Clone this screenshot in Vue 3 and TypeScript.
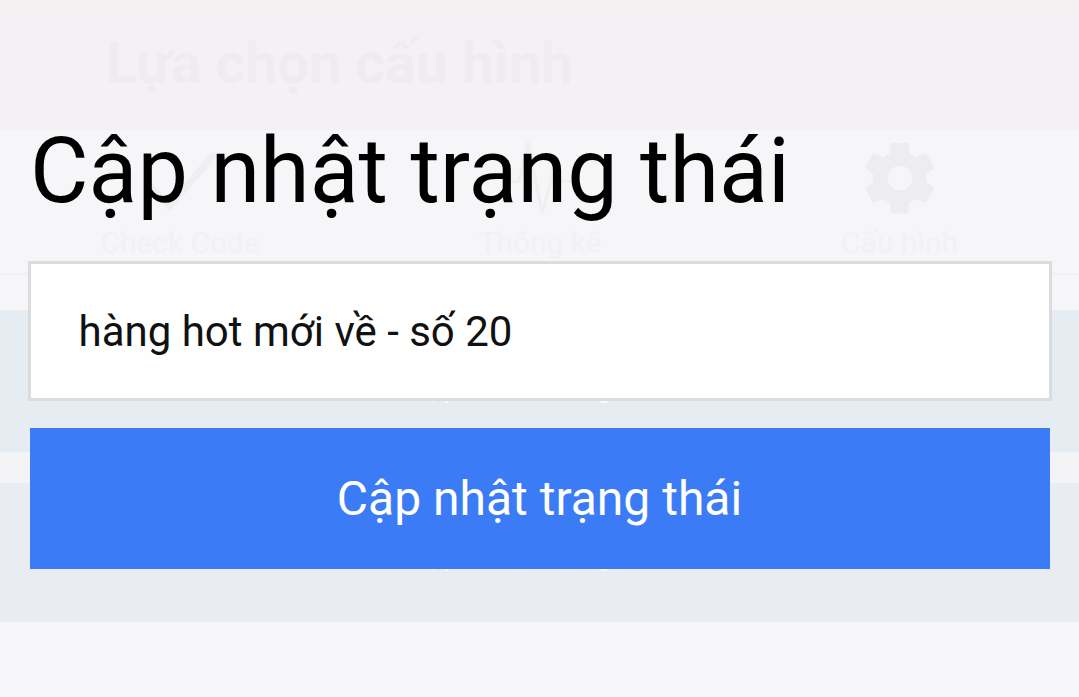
<script setup lang="ts">
const tabs = [
  { label: 'Check Code', kind: 'check' },
  { label: 'Thông kê', kind: 'pulse' },
  { label: 'Cấu hình', kind: 'gear' },
]
</script>

<template>
  <div class="screen">
    <div class="page">
      <header class="top"><h2 class="top-title">Lựa chọn cấu hình</h2></header>
      <nav class="tabs">
        <div v-for="t in tabs" :key="t.label" class="tab">
          <svg class="tab-icon" viewBox="0 0 24 24">
            <path v-if="t.kind === 'check'" d="M2 13l7 7L22 5" fill="none" stroke="#efeef1" stroke-width="2" />
            <path v-else-if="t.kind === 'pulse'" d="M2 13h4l2.6-11.3 4 20.3 3-11 1.5 2h5" fill="none" stroke="#efeef1" stroke-width="0.8" />
            <path v-else fill="#edecef" fill-rule="evenodd" d="M19.4 13c.04-.33.06-.66.06-1s-.02-.67-.06-1l2.1-1.65a.5.5 0 0 0 .12-.64l-2-3.46a.5.5 0 0 0-.61-.22l-2.49 1a7.3 7.3 0 0 0-1.73-1l-.38-2.65A.5.5 0 0 0 13.9 2h-4a.5.5 0 0 0-.49.42L9 5.07a7.7 7.7 0 0 0-1.73 1l-2.49-1a.5.5 0 0 0-.61.22l-2 3.46a.5.5 0 0 0 .12.64L4.4 11c-.04.33-.07.66-.07 1s.03.67.07 1l-2.11 1.65a.5.5 0 0 0-.12.64l2 3.46c.12.22.39.3.61.22l2.49-1c.52.4 1.08.73 1.73 1l.38 2.65c.04.24.25.42.49.42h4c.25 0 .46-.18.49-.42l.38-2.65a7.7 7.7 0 0 0 1.73-1l2.49 1c.22.08.49 0 .61-.22l2-3.46a.5.5 0 0 0-.12-.64L19.4 13zM12 15.5a3.5 3.5 0 1 1 0-7 3.5 3.5 0 0 1 0 7z" />
          </svg>
          <span class="tab-label">{{ t.label }}</span>
        </div>
      </nav>
      <div class="gap"></div>
      <div class="row row-a"><span>Cập nhật trạng thái</span></div>
      <div class="divider"></div>
      <div class="row row-b"><span>Cập nhật trạng thái</span></div>
      <div class="rest"></div>
    </div>

    <div class="dialog">
      <h1 class="title">Cập nhật trạng thái</h1>
      <div class="field">hàng hot mới về - số 20</div>
      <button class="submit" type="button">Cập nhật trạng thái</button>
    </div>
  </div>
</template>

<style scoped>
.screen {
  position: relative;
  width: 1079px;
  height: 697px;
  overflow: hidden;
  font-family: Roboto, "Noto Sans", sans-serif;
}
.page {
  display: flex;
  flex-direction: column;
  height: 100%;
  background: #f6f6f8;
}
.top {
  height: 130px;
  box-sizing: border-box;
  padding: 30px 0 0 106px;
  background: linear-gradient(#f5f0f2, #f3f1f5 40%);
}
.top-title {
  margin: 0;
  font-size: 57px;
  line-height: 68px;
  font-weight: 700;
  color: #efecf0;
  white-space: nowrap;
}
.tabs {
  display: grid;
  grid-template-columns: 360px 360px 359px;
  height: 145px;
  box-sizing: border-box;
  border-bottom: 2px solid #f0f1f3;
  background: #f6f5f8;
}
.tab {
  display: flex;
  flex-direction: column;
  align-items: center;
  padding-top: 6px;
}
.tab-icon {
  width: 84px;
  height: 84px;
}
.tab-label {
  margin-top: 6px;
  font-size: 30px;
  line-height: 34px;
  color: #f2f1f4;
  white-space: nowrap;
}
.gap {
  height: 35px;
  background: #f6f6f8;
}
.row {
  display: flex;
  justify-content: center;
  font-size: 32px;
  line-height: 40px;
  color: #f8fafc;
}
.row-a {
  height: 142px;
  padding-top: 56px;
  box-sizing: border-box;
  background: #e5edf3;
}
.row-b {
  height: 139px;
  padding-top: 51px;
  box-sizing: border-box;
  background: #e9edf1;
}
.divider {
  height: 31px;
  background: #f4f4f6;
}
.rest {
  flex: 1;
}
.dialog {
  position: absolute;
  inset: 0;
  display: flex;
  flex-direction: column;
  align-items: center;
}
.title {
  align-self: flex-start;
  margin: 116px 0 0 30px;
  font-size: 90px;
  line-height: 112px;
  font-weight: 400;
  color: #000;
  white-space: nowrap;
}
.field {
  box-sizing: border-box;
  width: 1024px;
  height: 140px;
  margin-top: 33px;
  padding-left: 48px;
  display: flex;
  align-items: center;
  background: #fff;
  border: 3px solid #dcdcde;
  font-size: 42px;
  color: #111;
  white-space: nowrap;
}
.submit {
  width: 1020px;
  height: 141px;
  margin-top: 27px;
  padding: 0;
  border: 0;
  background: #3b7cf6;
  color: #fff;
  font-family: inherit;
  font-size: 48px;
}
</style>
